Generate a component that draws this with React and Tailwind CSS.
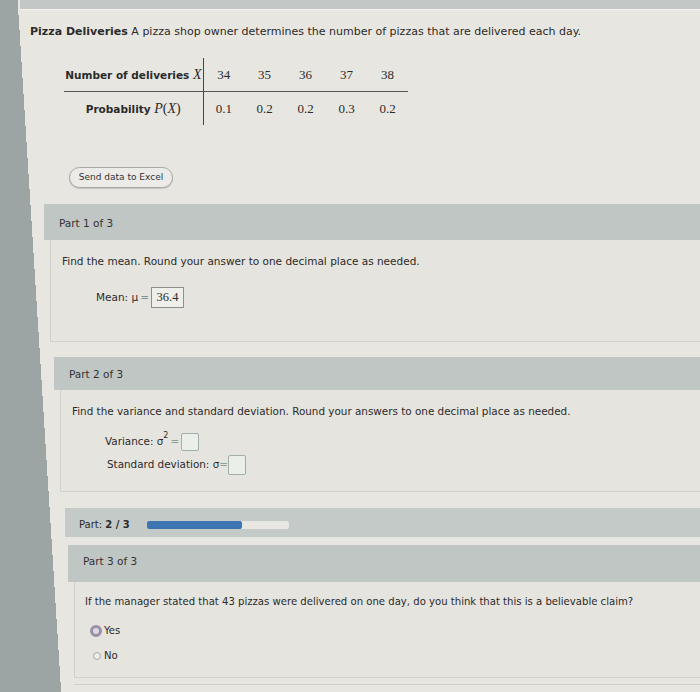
import React from 'react';

const values = ['34', '35', '36', '37', '38'];
const probs = ['0.1', '0.2', '0.2', '0.3', '0.2'];

function Header({ children, className }) {
  return (
    <div className={`flex items-center bg-[#bfc6c3] text-[10.5px] text-[#333] ${className}`}>
      {children}
    </div>
  );
}

function Box({ className }) {
  return <span className={`inline-block rounded-[2px] border border-[#9fb0ab] bg-[#eceeea] ${className}`} />;
}

export default function App() {
  return (
    <div className="h-[692px] overflow-hidden bg-[linear-gradient(86.4deg,#9ca4a4_61px,#e8e6e0_61px)] font-['DejaVu_Sans',sans-serif] text-[#2b2b2b]">
      <div className="ml-[20px] h-[10px] border-b border-[#f3f2ee] bg-[#c3c7c5]" />

      <p className="ml-[30px] mt-[15px] text-[11px] leading-[14px] whitespace-nowrap">
        <span className="font-bold">Pizza Deliveries</span> A pizza shop owner determines the number of pizzas that are delivered each day.
      </p>

      <table className="ml-[64px] mt-[19px] border-collapse">
        <tbody>
          <tr className="h-[33px] border-b border-[#555]">
            <td className="w-[139px] border-r border-[#444] pr-[1px] text-right text-[10.5px] font-bold whitespace-nowrap">
              Number of deliveries <span className="font-['Liberation_Serif',serif] text-[14px] font-normal italic">X</span>
            </td>
            {values.map((v, i) => (
              <td key={i} className="w-[41px] text-center font-['Liberation_Serif',serif] text-[13px]">{v}</td>
            ))}
          </tr>
          <tr className="h-[34px]">
            <td className="border-r border-[#444] text-center text-[10.5px] font-bold whitespace-nowrap">
              Probability <span className="font-['Liberation_Serif',serif] text-[14px] font-normal italic">P</span>
              <span className="font-['Liberation_Serif',serif] text-[14px] font-normal">(</span>
              <span className="font-['Liberation_Serif',serif] text-[14px] font-normal italic">X</span>
              <span className="font-['Liberation_Serif',serif] text-[14px] font-normal">)</span>
            </td>
            {probs.map((v, i) => (
              <td key={i} className="text-center font-['Liberation_Serif',serif] text-[13px]">{v}</td>
            ))}
          </tr>
        </tbody>
      </table>

      <button
        type="button"
        className="ml-[69px] mt-[42px] flex h-[21px] w-[104px] items-center justify-center rounded-full border border-[#a7a9a6] bg-[#ecebe7] text-[9px] text-[#333] shadow-[0_1px_1px_rgba(0,0,0,0.15)]"
      >
        Send data to Excel
      </button>

      <Header className="ml-[44px] mt-[16px] h-[36px] pl-[15px] pt-[4px]">Part 1 of 3</Header>
      <div className="ml-[50px] h-[102px] border-b border-l border-[#d2d2cd] bg-[#e6e4de] pl-[11px] pt-[15px] text-[10.5px]">
        <p className="leading-[13px]">Find the mean. Round your answer to one decimal place as needed.</p>
        <div className="ml-[34px] mt-[19px] flex items-center">
          <span>Mean: μ</span>
          <span className="mx-[2px] text-[#7f8f96]">=</span>
          <span className="flex h-[21px] w-[33px] items-center justify-center border border-[#8c918f] bg-[#eeeeea] font-['Liberation_Serif',serif] text-[12.5px]">
            36.4
          </span>
        </div>
      </div>

      <Header className="ml-[54px] mt-[15px] h-[33px] pl-[15px] pt-[2px]">Part 2 of 3</Header>
      <div className="ml-[60px] h-[102px] border-b border-l border-[#d2d2cd] bg-[#e6e4de] pl-[11px] pt-[15px] text-[10.4px]">
        <p className="leading-[13px] whitespace-nowrap">Find the variance and standard deviation. Round your answers to one decimal place as needed.</p>
        <div className="ml-[33px] mt-[15px] flex items-center">
          <span>Variance: σ</span>
          <span className="relative -top-[6px] text-[8px]">2</span>
          <span className="mx-[2px] text-[#8ea09a]">=</span>
          <Box className="h-[18px] w-[18px]" />
        </div>
        <div className="ml-[35px] mt-[4px] flex items-center">
          <span>Standard deviation: σ</span>
          <span className="text-[#8ea09a]">=</span>
          <Box className="h-[20px] w-[18px]" />
        </div>
      </div>

      <div className="ml-[65px] mt-[16px] flex h-[29px] items-center gap-[17px] bg-[#c4cac7] pl-[14px] pt-[4px] text-[10px]">
        <span>
          Part: <span className="font-bold">2 / 3</span>
        </span>
        <div className="h-[8px] w-[142px] rounded-[2px] bg-[#e8e7e2]">
          <div className="h-full w-[95px] rounded-[2px] bg-[#3d75b2]" />
        </div>
      </div>

      <Header className="ml-[68px] mt-[8px] h-[37px] pl-[15px] pb-[4px]">Part 3 of 3</Header>
      <div className="ml-[74px] h-[96px] border-b border-l border-[#d2d2cd] bg-[#e6e4de] pl-[10px] pt-[14px] text-[10.1px]">
        <p className="leading-[12px] whitespace-nowrap">
          If the manager stated that 43 pizzas were delivered on one day, do you think that this is a believable claim?
        </p>
        <div className="ml-[5px] mt-[15px] flex items-center gap-[2px]">
          <span className="inline-block h-[12px] w-[12px] rounded-full border-[3px] border-[#9a8fa6] bg-[#dcd9df]" />
          <span>Yes</span>
        </div>
        <div className="ml-[8px] mt-[10px] flex items-center gap-[3px]">
          <span className="inline-block h-[8px] w-[8px] rounded-full border border-[#a3a8a6] bg-[#eceeec]" />
          <span>No</span>
        </div>
      </div>
      <div className="ml-[74px] mt-[6px] border-t border-[#d0d0cb]" />
    </div>
  );
}
